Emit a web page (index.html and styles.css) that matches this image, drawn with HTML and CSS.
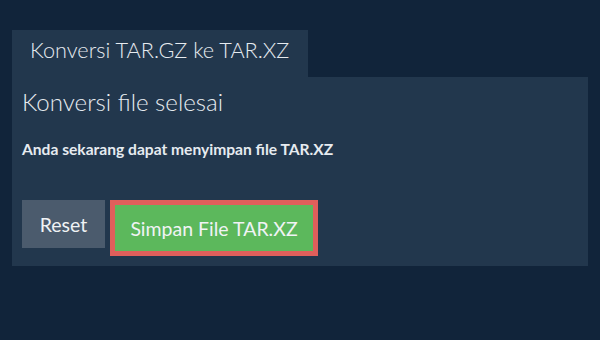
FILE: index.html
```html
<!DOCTYPE html>
<html lang="id">
<head>
<meta charset="utf-8">
<link rel="stylesheet" href="styles.css">
</head>
<body>
<div class="wrap">
  <div class="tab">Konversi TAR.GZ ke TAR.XZ</div>
  <div class="panel">
    <h2 class="title">Konversi file selesai</h2>
    <p class="msg">Anda sekarang dapat menyimpan file TAR.XZ</p>
    <div class="actions">
      <button class="btn reset">Reset</button>
      <div class="save-ring"><button class="btn save">Simpan File TAR.XZ</button></div>
    </div>
  </div>
</div>
</body>
</html>
```
FILE: styles.css
```css
html, body { margin: 0; padding: 0; }
body {
  background: #11243a;
  width: 600px;
  height: 340px;
  font-family: Lato, "Open Sans", sans-serif;
  color: #e6ebf0;
}
.wrap { padding: 30px 12px 0 12px; }
.tab {
  display: inline-block;
  background: #22374d;
  height: 47px;
  line-height: 40px;
  padding: 0 18px;
  width: 260px;
  font-size: 21.7px;
  font-weight: 300;
  white-space: nowrap;
  box-sizing: content-box;
}
.panel {
  background: #22374d;
  height: 189px;
  padding: 0 10px;
  box-sizing: border-box;
}
.title {
  margin: 0;
  padding-top: 10px;
  font-size: 24.1px;
  font-weight: 300;
  line-height: 30px;
}
.msg {
  margin: 0;
  padding-top: 22px;
  font-size: 15.6px;
  font-weight: 700;
  line-height: 20px;
}
.actions {
  display: flex;
  align-items: flex-start;
  gap: 5px;
  margin-top: 41px;
}
.btn {
  border: 0;
  padding: 0;
  font-family: Lato, "Open Sans", sans-serif;
  font-size: 19.5px;
  color: #f0f3f5;
  cursor: pointer;
}
.reset {
  background: #4b5b6d;
  width: 83px;
  height: 48px;
}
.save-ring {
  border: 5px solid #df5f5b;
  display: flex;
}
.save {
  background: #5cb85c;
  width: 198px;
  height: 46px;
}
```
